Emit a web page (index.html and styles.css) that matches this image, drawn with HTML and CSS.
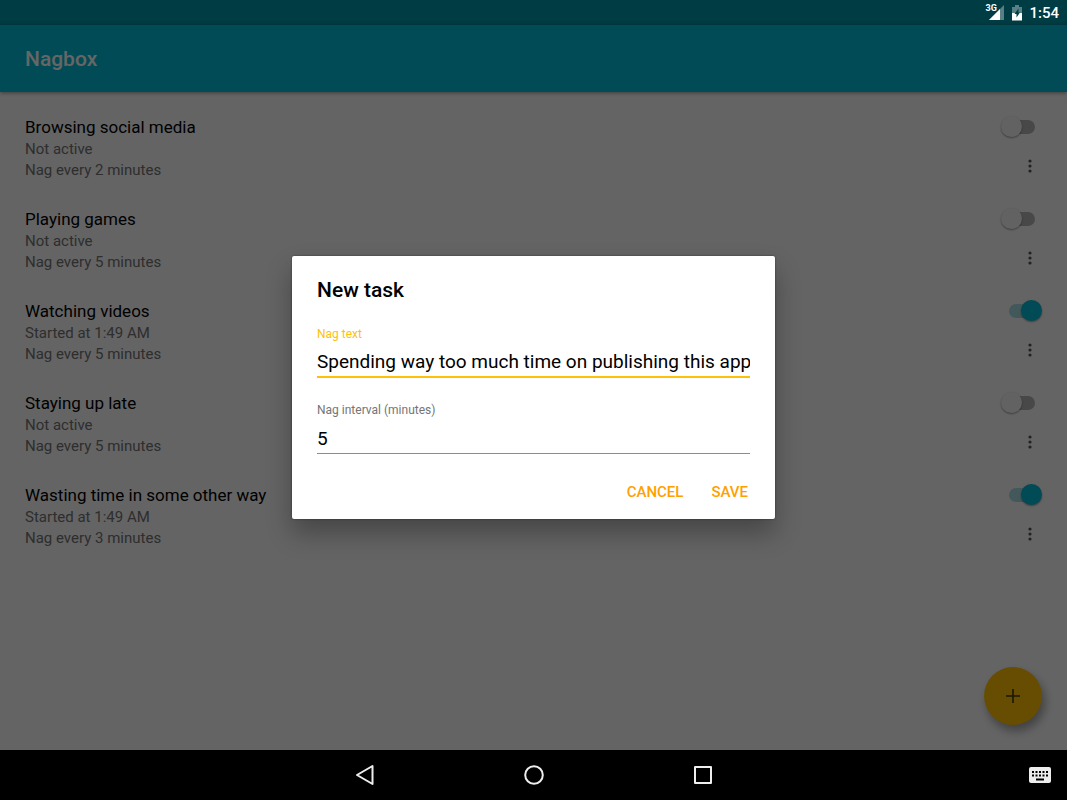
FILE: index.html
```
<!DOCTYPE html>
<html lang="en">
<head>
<meta charset="utf-8">
<meta name="viewport" content="width=device-width, initial-scale=1">
<title>Nagbox</title>
<link rel="stylesheet" href="styles.css">
</head>
<body>

<div class="statusbar">
	<span class="signal">
		<svg width="20" height="17" viewBox="0 0 20 17">
			<path d="M19 1v15H4z" fill="#fff" fill-opacity=".35"/>
			<path d="M15 5v11H4z" fill="#fff"/>
		</svg>
		<span class="network">3G</span>
	</span>
	<svg class="battery" width="10" height="16" viewBox="0 0 10 16">
		<path d="M3 0h4v2h3v7H0V2h3z" fill="#fff" fill-opacity=".35"/>
		<path d="M0 8h10v7.500H0z" fill="#fff"/>
		<path d="M6.500 3.500L2.500 9h2v3.500L8 7.500H6.500z" fill="#003c43"/>
	</svg>
	<span class="clock">1:54</span>
</div>

<div class="app">
	<header class="toolbar"><h1>Nagbox</h1></header>

	<ul class="tasks">
		<li>
			<div class="info">
				<label class="name" for="task1">Browsing social media</label>
				<p>Not active</p>
				<p>Nag every 2 minutes</p>
			</div>
			<div class="controls">
				<input type="checkbox" class="switch" id="task1">
				<button class="more" aria-label="More options"><svg width="4" height="14" viewBox="0 0 4 14"><circle cx="2" cy="2" r="1.600"/><circle cx="2" cy="7" r="1.600"/><circle cx="2" cy="12" r="1.600"/></svg></button>
			</div>
		</li>
		<li>
			<div class="info">
				<label class="name" for="task2">Playing games</label>
				<p>Not active</p>
				<p>Nag every 5 minutes</p>
			</div>
			<div class="controls">
				<input type="checkbox" class="switch" id="task2">
				<button class="more" aria-label="More options"><svg width="4" height="14" viewBox="0 0 4 14"><circle cx="2" cy="2" r="1.600"/><circle cx="2" cy="7" r="1.600"/><circle cx="2" cy="12" r="1.600"/></svg></button>
			</div>
		</li>
		<li>
			<div class="info">
				<label class="name" for="task3">Watching videos</label>
				<p>Started at 1:49 AM</p>
				<p>Nag every 5 minutes</p>
			</div>
			<div class="controls">
				<input type="checkbox" class="switch" id="task3" checked>
				<button class="more" aria-label="More options"><svg width="4" height="14" viewBox="0 0 4 14"><circle cx="2" cy="2" r="1.600"/><circle cx="2" cy="7" r="1.600"/><circle cx="2" cy="12" r="1.600"/></svg></button>
			</div>
		</li>
		<li>
			<div class="info">
				<label class="name" for="task4">Staying up late</label>
				<p>Not active</p>
				<p>Nag every 5 minutes</p>
			</div>
			<div class="controls">
				<input type="checkbox" class="switch" id="task4">
				<button class="more" aria-label="More options"><svg width="4" height="14" viewBox="0 0 4 14"><circle cx="2" cy="2" r="1.600"/><circle cx="2" cy="7" r="1.600"/><circle cx="2" cy="12" r="1.600"/></svg></button>
			</div>
		</li>
		<li>
			<div class="info">
				<label class="name" for="task5">Wasting time in some other way</label>
				<p>Started at 1:49 AM</p>
				<p>Nag every 3 minutes</p>
			</div>
			<div class="controls">
				<input type="checkbox" class="switch" id="task5" checked>
				<button class="more" aria-label="More options"><svg width="4" height="14" viewBox="0 0 4 14"><circle cx="2" cy="2" r="1.600"/><circle cx="2" cy="7" r="1.600"/><circle cx="2" cy="12" r="1.600"/></svg></button>
			</div>
		</li>
	</ul>

	<button class="fab" aria-label="Add task">
		<svg width="16" height="16" viewBox="0 0 16 16"><path d="M7.200 1h1.600v6.200H15v1.600H8.800V15H7.200V8.800H1V7.200h6.200z" fill="#443a10"/></svg>
	</button>

	<div class="scrim">
		<form class="dialog">
			<h2>New task</h2>
			<div class="field active">
				<label for="text">Nag text</label>
				<input type="text" id="text" value="Spending way too much time on publishing this app">
			</div>
			<div class="field">
				<label for="interval">Nag interval (minutes)</label>
				<input type="text" id="interval" value="5">
			</div>
			<div class="buttons">
				<button type="button">CANCEL</button>
				<button type="button">SAVE</button>
			</div>
		</form>
	</div>
</div>

<nav class="navbar">
	<button aria-label="Back"><svg width="22" height="22" viewBox="0 0 22 22"><path d="M18.500 2v18L3 11z" fill="none" stroke="#eee" stroke-width="2" stroke-linejoin="round"/></svg></button>
	<button aria-label="Home"><svg width="22" height="22" viewBox="0 0 22 22"><circle cx="11" cy="11" r="8.800" fill="none" stroke="#eee" stroke-width="2"/></svg></button>
	<button aria-label="Recent apps"><svg width="22" height="22" viewBox="0 0 22 22"><path d="M3 3h16v16H3z" fill="none" stroke="#eee" stroke-width="2" stroke-linejoin="round"/></svg></button>
	<button class="keyboard" aria-label="Keyboard"><svg width="22" height="16" viewBox="0 0 22 16">
		<rect width="22" height="16" rx="2" fill="#eee"/>
		<path d="M3 5h16M3 8.500h16" stroke="#000" stroke-width="2" stroke-dasharray="2 1.500"/>
		<path d="M7 12.500h8" stroke="#000" stroke-width="2"/>
	</svg></button>
</nav>

</body>
</html>
```
FILE: styles.css
```
* {
	box-sizing: border-box;
}

body {
	margin: 0;
	min-height: 100vh;
	display: flex;
	flex-direction: column;
	font-family: Roboto, sans-serif;
	background: #fafafa;
	color: #000;
}

h1, h2, p, ul {
	margin: 0;
	padding: 0;
}

button {
	border: 0;
	padding: 0;
	background: none;
	font-family: inherit;
}

svg {
	display: block;
}

/* system bars */
.statusbar {
	height: 25px;
	padding-right: 8px;
	display: flex;
	align-items: center;
	justify-content: flex-end;
	gap: 7px;
	background: #003c43;
	color: #fff;
}

.signal {
	position: relative;
}

.network {
	position: absolute;
	left: 0;
	top: 0;
	font-size: 9px;
	font-weight: 700;
	line-height: 9px;
}

.clock {
	font-size: 15px;
	font-weight: 500;
}

.navbar {
	position: relative;
	height: 50px;
	display: flex;
	align-items: center;
	justify-content: center;
	gap: 147px;
	background: #000;
}

.navbar .keyboard {
	position: absolute;
	right: 16px;
}

/* app */
.app {
	position: relative;
	flex: 1;
}

.toolbar {
	height: 67px;
	padding: 0 25px;
	display: flex;
	align-items: center;
	background: #00bcd4;
	color: #fff;
	box-shadow: 0 1px 4px rgba(0, 0, 0, .4);
}

.toolbar h1 {
	font-size: 21px;
	font-weight: 500;
}

.tasks {
	padding: 11px 25px;
	list-style: none;
}

.tasks li {
	height: 92px;
	padding: 12px 0;
	display: flex;
	justify-content: space-between;
}

.name {
	display: block;
	font-size: 17px;
	line-height: 24px;
}

.info p {
	font-size: 15px;
	line-height: 21px;
	color: #737373;
}

.controls {
	display: flex;
	flex-direction: column;
	align-items: flex-end;
	gap: 21px;
}

.switch {
	appearance: none;
	position: relative;
	width: 42px;
	height: 22px;
	margin: 1px 0 0;
}

.switch::before {
	content: "";
	position: absolute;
	left: 7px;
	top: 4px;
	width: 28px;
	height: 14px;
	border-radius: 7px;
	background: #b5b5b5;
}

.switch::after {
	content: "";
	position: absolute;
	left: 1px;
	top: 0;
	width: 21px;
	height: 21px;
	border-radius: 50%;
	background: #f5f5f5;
	box-shadow: 0 1px 2px rgba(0, 0, 0, .4);
}

.switch:checked::before {
	left: 9px;
	background: #a5dde3;
}

.switch:checked::after {
	left: 21px;
	background: #00bcd4;
}

.more {
	width: 24px;
	height: 14px;
	display: flex;
	justify-content: center;
	fill: #555;
}

.fab {
	position: absolute;
	right: 25px;
	bottom: 25px;
	width: 58px;
	height: 58px;
	display: flex;
	align-items: center;
	justify-content: center;
	border-radius: 50%;
	background: #ffc107;
	box-shadow: 3px 6px 10px rgba(0, 0, 0, .35);
}

/* dialog */
.scrim {
	position: absolute;
	inset: 0;
	display: flex;
	align-items: center;
	justify-content: center;
	background: rgba(0, 0, 0, .6);
}

.dialog {
	width: 483px;
	padding: 21px 25px 13px;
	border-radius: 2px;
	background: #fff;
	box-shadow: 0 0 2px rgba(0, 0, 0, .5), 0 14px 26px rgba(0, 0, 0, .3);
}

.dialog h2 {
	margin-bottom: 23px;
	font-size: 21px;
	font-weight: 500;
	line-height: 26px;
}

.field {
	margin-bottom: 24px;
}

.field label {
	display: block;
	font-size: 12px;
	line-height: 16px;
	color: #757575;
}

.field input {
	display: block;
	width: 100%;
	height: 36px;
	padding: 8px 0 3px;
	border: 0;
	border-bottom: 1px solid #8c8c8c;
	outline: 0;
	font-family: inherit;
	font-size: 19px;
	background: none;
}

.field.active label {
	color: #ffc107;
}

.field.active input {
	border-bottom: 2px solid #ffc107;
}

.buttons {
	display: flex;
	justify-content: flex-end;
	gap: 24px;
}

.buttons button {
	height: 28px;
	padding: 0 2px;
	font-size: 15px;
	font-weight: 500;
	color: #ffa000;
}
```
